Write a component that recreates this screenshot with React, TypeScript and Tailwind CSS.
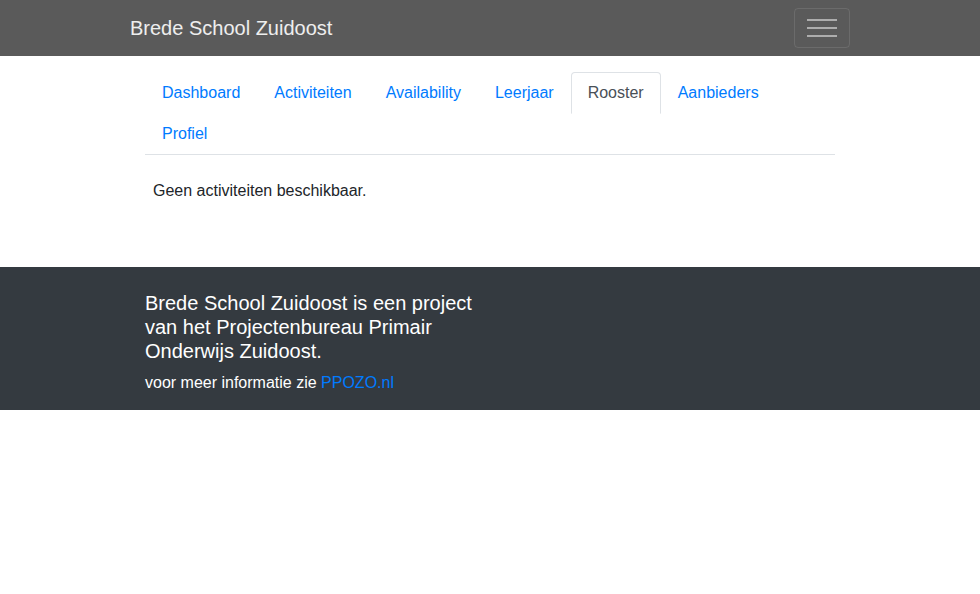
import React from 'react'

const tabs = ['Dashboard', 'Activiteiten', 'Availability', 'Leerjaar', 'Rooster', 'Aanbieders', 'Profiel']

function App() {
  const active = 'Rooster'

  return (
    <div className="min-h-screen bg-white font-['Liberation_Sans',Arial,sans-serif] text-[#212529] text-base leading-6">
      {/* Navbar */}
      <nav className="bg-[#5a5a5a] h-14">
        <div className="w-[720px] mx-auto h-full flex items-center justify-between">
          <a href="#" className="text-xl text-white/90 leading-[30px]">
            Brede School Zuidoost
          </a>
          <button className="w-14 h-10 border border-white/10 rounded flex flex-col items-center justify-center gap-[6px]">
            <span className="block w-[30px] h-[2px] bg-white/50"></span>
            <span className="block w-[30px] h-[2px] bg-white/50"></span>
            <span className="block w-[30px] h-[2px] bg-white/50"></span>
          </button>
        </div>
      </nav>

      {/* Main */}
      <div className="w-[720px] mx-auto px-[15px] pt-4 pb-[64px]">
        <ul className="flex flex-wrap border-b border-[#dee2e6]">
          {tabs.map((tab) => (
            <li key={tab} className="-mb-px">
              <a
                href="#"
                className={
                  tab === active
                    ? 'block px-4 py-2 border border-[#dee2e6] border-b-white rounded-t bg-white text-[#495057]'
                    : 'block px-4 py-2 border border-transparent rounded-t text-[#007bff]'
                }
              >
                {tab}
              </a>
            </li>
          ))}
        </ul>
        <div className="px-2 pt-6">
          <p>Geen activiteiten beschikbaar.</p>
        </div>
      </div>

      {/* Footer */}
      <footer className="bg-[#343a40] text-white">
        <div className="w-[720px] mx-auto px-[15px] pt-6 pb-[15px]">
          <div className="w-[330px]">
            <h5 className="text-xl leading-[1.2] mb-2">
              Brede School Zuidoost is een project van het Projectenbureau Primair Onderwijs Zuidoost.
            </h5>
            <p>
              voor meer informatie zie{' '}
              <a href="#" className="text-[#007bff]">
                PPOZO.nl
              </a>
            </p>
          </div>
        </div>
      </footer>
    </div>
  )
}

export default App
